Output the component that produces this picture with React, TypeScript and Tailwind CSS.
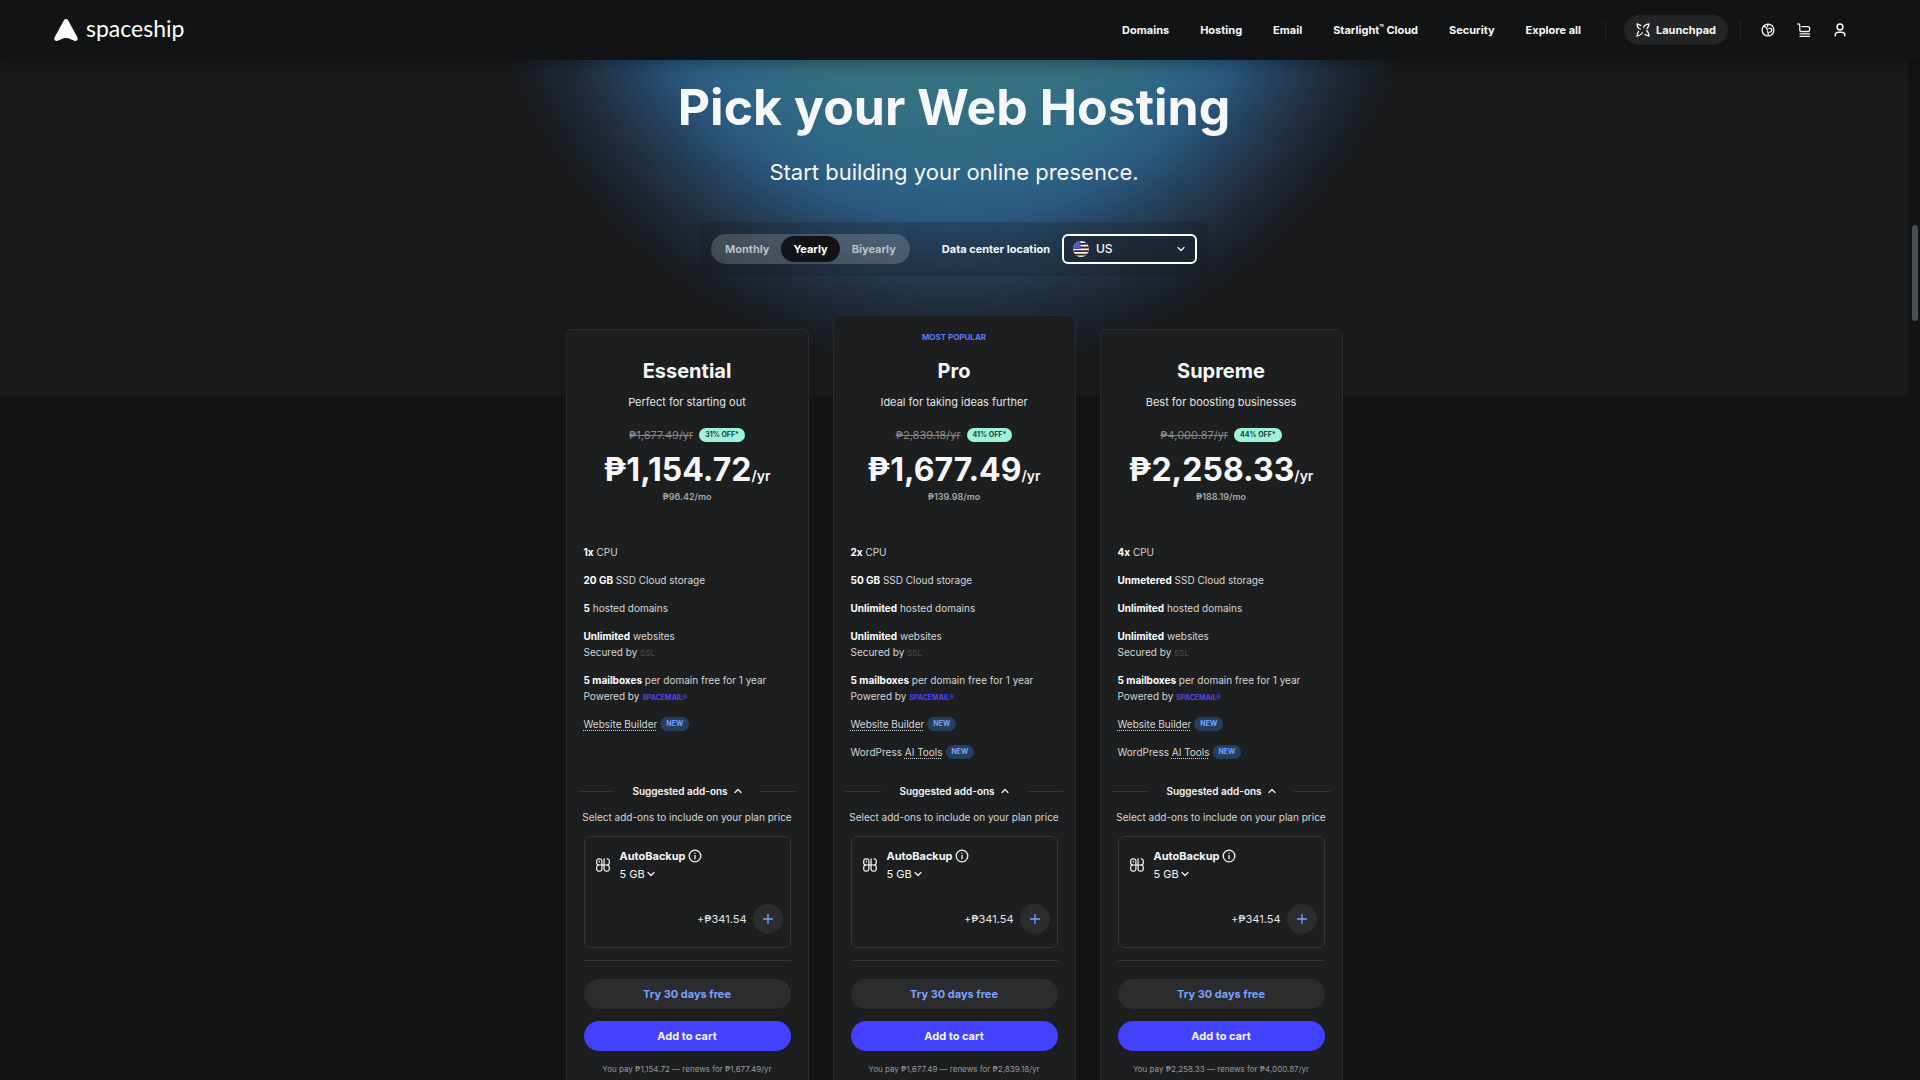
import React from "react";

type Plan = {
  name: string;
  tagline: string;
  popular?: boolean;
  oldPrice: string;
  discount: string;
  price: string;
  monthly: string;
  cpu: string;
  storage: string;
  domains: string;
  aiTools: boolean;
};

const navLinks = ["Domains", "Hosting", "Email", "Starlight", "Security", "Explore all"];

const plans: Plan[] = [
  {
    name: "Essential",
    tagline: "Perfect for starting out",
    oldPrice: "₱1,677.49",
    discount: "31% OFF*",
    price: "₱1,154.72",
    monthly: "₱96.42/mo",
    cpu: "1x",
    storage: "20 GB",
    domains: "5",
    aiTools: false,
  },
  {
    name: "Pro",
    tagline: "Ideal for taking ideas further",
    popular: true,
    oldPrice: "₱2,839.18",
    discount: "41% OFF*",
    price: "₱1,677.49",
    monthly: "₱139.98/mo",
    cpu: "2x",
    storage: "50 GB",
    domains: "Unlimited",
    aiTools: true,
  },
  {
    name: "Supreme",
    tagline: "Best for boosting businesses",
    oldPrice: "₱4,000.87",
    discount: "44% OFF*",
    price: "₱2,258.33",
    monthly: "₱188.19/mo",
    cpu: "4x",
    storage: "Unmetered",
    domains: "Unlimited",
    aiTools: true,
  },
];

function Chevron({ up = false, className = "" }: { up?: boolean; className?: string }) {
  return (
    <svg viewBox="0 0 8 8" className={`size-2 fill-none stroke-current ${className}`} strokeWidth="1.2" strokeLinecap="round" strokeLinejoin="round" aria-hidden="true">
      <path d={up ? "M1 5.5 4 2.5l3 3" : "M1 2.5l3 3 3-3"} />
    </svg>
  );
}

function Logo() {
  return (
    <a href="#" className="flex items-center gap-2 text-white">
      <svg viewBox="0 0 24 22" className="h-[22px] w-6 fill-white" aria-hidden="true">
        <path d="M9.8 1.5C10.3.5 11.1 0 12 0s1.700.5 2.200 1.500l9.300 16.900c.9 1.900-.6 4-2.700 3.500-2.900-.7-5.300-2.800-8.800-2.800s-5.900 2.100-8.800 2.800c-2.100.5-3.600-1.600-2.700-3.500z" />
      </svg>
      <span className="pb-1 font-['Lato',sans-serif] text-[23px] leading-6">spaceship</span>
    </a>
  );
}

function LaunchpadIcon() {
  return (
    <svg viewBox="0 0 14 14" className="size-3.5 fill-none stroke-current" strokeWidth="1.3" strokeLinecap="round" strokeLinejoin="round" aria-hidden="true">
      <path d="M4.800 2.400 1 .9c0 2 .6 3.300 1.800 4.600L4.400 6" />
      <path d="M7.600 4.200c.4-1.400 2.600-2.800 5.400-3.300-.2 1.800-.8 3.200-1.800 4.600" />
      <path d="M10.600 7.600c1.200.8 2.200 3 2.400 5.500L9 11.600" />
      <path d="M6.400 9.800C5.400 11.600 3.600 12.600 1 13.100c.1-2 .6-3.400 1.600-4.800" />
    </svg>
  );
}

function GlobeIcon() {
  return (
    <svg viewBox="0 0 14 14" className="size-3.5 fill-none stroke-current" strokeWidth="1.3" strokeLinecap="round" strokeLinejoin="round" aria-hidden="true">
      <circle cx="7" cy="7" r="5.900" />
      <path d="M3.400 3.400 5.600 4.800 6.600 7M7 1.400 6.600 3.400M7.200 11.800V9.600l-.8-1M8 5.400h2l1 1.400-.8 1.800-1.400.6" />
    </svg>
  );
}

function CartIcon() {
  return (
    <svg viewBox="0 0 14 14" className="size-3.5 fill-none stroke-current" strokeWidth="1.3" strokeLinecap="round" strokeLinejoin="round" aria-hidden="true">
      <path d="M.8 1h.8c.7 0 1.200.5 1.200 1.200V7.200c0 .8.5 1.300 1.300 1.300h6.900c.9 0 1.600-.7 1.600-1.600V5.200c0-.9-.7-1.600-1.600-1.600H5M3 10.900h9.600M3 13.300h9.600" />
    </svg>
  );
}

function UserIcon() {
  return (
    <svg viewBox="0 0 14 14" className="size-3.5 fill-none stroke-current" strokeWidth="1.5" strokeLinecap="round" aria-hidden="true">
      <circle cx="7" cy="4" r="2.900" />
      <path d="M2.200 12.800v-.6a3 3 0 0 1 3-3h3.600a3 3 0 0 1 3 3v.6" />
    </svg>
  );
}

function BackupIcon() {
  return (
    <svg viewBox="0 0 14 14" className="size-3.5 fill-none stroke-current" strokeWidth="1.2" strokeLinecap="round" strokeLinejoin="round" aria-hidden="true">
      <path d="M5.900 7V3a2.200 2.200 0 0 0-2.200-2.200H2.900A2.200 2.200 0 0 0 .7 3v1.800A2.200 2.200 0 0 0 2.900 7h8.200a2.200 2.200 0 0 0 2.200-2.200V3a2.200 2.200 0 0 0-2.200-2.200" />
      <path d="M3.300 3.200v.8M8.100.8V7" />
      <path d="M5.900 7v4a2.200 2.200 0 0 1-2.200 2.200h-.8A2.200 2.200 0 0 1 .7 11V9.200M8.100 7v4a2.200 2.200 0 0 0 2.200 2.200h.8a2.200 2.200 0 0 0 2.200-2.200V9.200A2.200 2.200 0 0 0 11.100 7M.7 9.200A2.200 2.200 0 0 1 2.900 7" />
    </svg>
  );
}

function InfoIcon() {
  return (
    <svg viewBox="0 0 14 14" className="size-3.5 fill-none stroke-current" strokeWidth="1.3" strokeLinecap="round" aria-hidden="true">
      <circle cx="7" cy="7" r="5.800" />
      <path d="M7 6.500v3.300M7 4.200v.1" />
    </svg>
  );
}

function FlagUS() {
  return (
    <svg viewBox="0 0 16 16" className="pointer-events-none absolute left-[11px] size-4" aria-hidden="true">
      <defs>
        <clipPath id="flag">
          <circle cx="8" cy="8" r="8" />
        </clipPath>
      </defs>
      <g clipPath="url(#flag)">
        <path fill="#f7f7f7" d="M0 0h16v16H0z" />
        <path fill="#3a2226" d="M0 2h16v1.800H0zM0 5.600h16v1.800H0zM0 9.200h16V11H0zM0 12.800h16v1.600H0z" />
        <path fill="#4647d8" d="M0 0h7.500v8H0z" />
        <path stroke="#b9bbf5" strokeWidth=".8" strokeDasharray=".8 1.400" d="M1 2h6M1 4h6M1 6h6" />
      </g>
    </svg>
  );
}

function Header() {
  return (
    <header className="relative z-10 flex h-[60px] shrink-0 items-center justify-between bg-[#121315] pr-[73px] pl-[54px] shadow-[0_6px_12px_rgba(0,0,0,0.25)]">
      <Logo />
      <div className="flex items-center text-[11px] font-bold">
        <nav className="flex gap-[31px]">
          {navLinks.map((link) => (
            <a key={link} href="#">
              {link === "Starlight" ? (
                <>
                  Starlight<sup className="text-[7px]">™</sup> Cloud
                </>
              ) : (
                link
              )}
            </a>
          ))}
        </nav>
        <span className="ml-6 h-[18px] w-px bg-[#222326]" />
        <button className="ml-[18px] flex h-[30px] items-center gap-1.5 rounded-full bg-[#232426] px-3">
          <LaunchpadIcon />
          Launchpad
        </button>
        <span className="ml-3 h-[18px] w-px bg-[#222326]" />
        <div className="ml-5 flex gap-[22px]">
          <button aria-label="Currency">
            <GlobeIcon />
          </button>
          <button aria-label="Cart">
            <CartIcon />
          </button>
          <button aria-label="Account">
            <UserIcon />
          </button>
        </div>
      </div>
    </header>
  );
}

function Controls() {
  return (
    <div className="mx-auto mt-[34px] flex h-[54px] w-fit items-center rounded-lg bg-[#18191b]/25 px-3 text-[11px] font-bold">
      <div className="flex h-[30px] items-center rounded-full bg-white/18 p-0.5 text-[#b9bfc6]">
        <button className="px-3">Monthly</button>
        <button className="h-[26px] rounded-full bg-[#121315] px-3 text-white">Yearly</button>
        <button className="px-3">Biyearly</button>
      </div>
      <label htmlFor="location" className="ml-8">
        Data center location
      </label>
      <div className="relative ml-3 flex items-center">
        <FlagUS />
        <select
          id="location"
          className="h-[30px] w-[135px] appearance-none rounded-md border-2 border-white bg-[#1c2733]/60 pl-8 text-xs font-medium [&>option]:bg-[#1d1e20]"
        >
          <option>US</option>
          <option>UK</option>
        </select>
        <Chevron className="pointer-events-none absolute right-3" />
      </div>
    </div>
  );
}

function NewBadge() {
  return <span className="ml-[3px] rounded-full bg-[#24405e] px-1.5 text-[7px] leading-3.5 font-bold text-[#7aa2ff]">NEW</span>;
}

function PlanCard({ plan }: { plan: Plan }) {
  const dotted = "underline decoration-dotted underline-offset-2";
  return (
    <article className={`w-[243px] rounded-md border border-[#2a2b2d] bg-[#1d1e20] px-[17px] ${plan.popular ? "pt-3.5" : "mt-3.5"}`}>
      <div className="h-[29px] pt-px text-center text-[8px] leading-3 font-bold text-[#5b7cfa]">
        {plan.popular && <span className="block">MOST POPULAR</span>}
      </div>

      <div className="text-center">
        <h2 className="text-xl leading-6 font-bold">{plan.name}</h2>
        <p className="mt-[11px] text-[11px] leading-4 text-[#e3e3e4]">{plan.tagline}</p>
        <p className="mt-[17px] flex h-4 items-center justify-center gap-1.5 text-[11px] text-[#858688]">
          <s>{plan.oldPrice}/yr</s>
          <span className="rounded-full bg-[#9ff2da] px-1.5 text-[7px] leading-3.5 font-bold text-[#1d3a4c]">{plan.discount}</span>
        </p>
        <p className="mt-[7px] text-[32px] leading-10 font-bold whitespace-nowrap">
          {plan.price}
          <span className="text-sm font-semibold">/yr</span>
        </p>
        <p className="mt-px text-[9px] leading-3 font-semibold text-[#a5a6a8]">{plan.monthly}</p>
      </div>

      <ul className="mt-[41px] flex h-[215px] flex-col gap-3 text-[10px] leading-4 text-[#d5d6d7] [&_b]:text-white">
        <li>
          <b>{plan.cpu}</b> CPU
        </li>
        <li>
          <b>{plan.storage}</b> SSD Cloud storage
        </li>
        <li>
          <b>{plan.domains}</b> hosted domains
        </li>
        <li>
          <b>Unlimited</b> websites
          <br />
          Secured by <span className="text-[8px] leading-3 text-[#4c4d50]">SSL</span>
        </li>
        <li>
          <b>5 mailboxes</b> per domain free for 1 year
          <br />
          Powered by <span className="text-[7px] leading-3 font-bold text-[#4f46f0]">SPACEMAIL®</span>
        </li>
        <li className="flex h-4 items-center">
          <a href="#" className={dotted}>Website Builder</a>
          <NewBadge />
        </li>
        {plan.aiTools && (
          <li className="flex h-4 items-center">
            <span>
              WordPress <a href="#" className={dotted}>AI Tools</a>
            </span>
            <NewBadge />
          </li>
        )}
      </ul>

      <div className="-mx-1.5 mt-6 flex items-center justify-between">
        <span className="h-px w-9 bg-[#333436]" />
        <button className="flex items-center gap-1.5 text-[10px] leading-4 font-semibold">
          Suggested add-ons
          <Chevron up />
        </button>
        <span className="h-px w-9 bg-[#333436]" />
      </div>
      <p className="-mx-2 mt-2.5 text-center text-[10px] leading-4 text-[#d5d6d7]">Select add-ons to include on your plan price</p>

      <div className="mt-[11px] flex h-28 flex-col rounded-md border border-[#333436] py-[11px] pr-[7px] pl-[11px]">
        <div className="flex items-center gap-2.5">
          <BackupIcon />
          <div>
            <p className="flex items-center gap-0.5 text-[11px] leading-4 font-bold">
              AutoBackup
              <InfoIcon />
            </p>
            <div className="relative mt-0.5 flex w-fit items-center">
              <select aria-label="AutoBackup size" className="field-sizing-content appearance-none pr-3 text-[11px] leading-4 [&>option]:bg-[#1d1e20]">
                <option>5 GB</option>
                <option>10 GB</option>
              </select>
              <Chevron className="pointer-events-none absolute right-0.5" />
            </div>
          </div>
        </div>
        <div className="mt-[22px] flex items-center justify-end gap-1.5 text-[11px] text-[#e3e3e4]">
          +₱341.54
          <button aria-label="Add AutoBackup" className="flex size-[30px] items-center justify-center rounded-full bg-[#2b2c2e]">
            <svg viewBox="0 0 10 10" className="size-2.5 stroke-[#7aa2ff]" strokeWidth="1.300" strokeLinecap="round" aria-hidden="true">
              <path d="M5 .5v9M.5 5h9" />
            </svg>
          </button>
        </div>
      </div>

      <hr className="mt-3 border-[#333436]" />

      <div className="mt-[18px] flex flex-col gap-3 text-[11px] font-bold">
        <button className="h-[30px] rounded-full bg-[#2b2c2e] text-[#7aa2ff]">Try 30 days free</button>
        <button className="h-[30px] rounded-full bg-[#4141ff]">Add to cart</button>
      </div>
      <p className="-mx-3 mt-3 pb-6 text-center text-[8px] leading-3 text-[#98999b]">
        You pay {plan.price} — renews for {plan.oldPrice}/yr
      </p>
    </article>
  );
}

export default function App() {
  return (
    <div className="flex h-screen flex-col overflow-hidden bg-[#121315] font-['Inter',sans-serif] text-[#f6f7f8]">
      <Header />
      <div className="flex min-h-0 flex-1">
        <main className="min-w-0 flex-1">
          {/* Hero */}
          <section className="h-[336px] bg-[#18191b] bg-[radial-gradient(circle_478px_at_50%_-169px,#357181_0px,#347080_220px,#2d6385_295px,#2a577d_330px,#24425e_370px,#1f2c3b_418px,#18191b_478px)] pt-3 text-center">
            <h1 className="text-[50px] leading-[70px] font-bold">Pick your Web Hosting</h1>
            <p className="mt-3.5 text-[22px] leading-8">Start building your online presence.</p>
            <Controls />
          </section>

          {/* Plans */}
          <section className="relative -mt-[81px] flex justify-center gap-6">
            {plans.map((plan) => (
              <PlanCard key={plan.name} plan={plan} />
            ))}
          </section>
        </main>

        {/* Scrollbar */}
        <div className="w-3 pt-[165px] pl-1">
          <div className="h-24 w-1.5 rounded-full bg-[#4b4e54]" />
        </div>
      </div>
    </div>
  );
}
